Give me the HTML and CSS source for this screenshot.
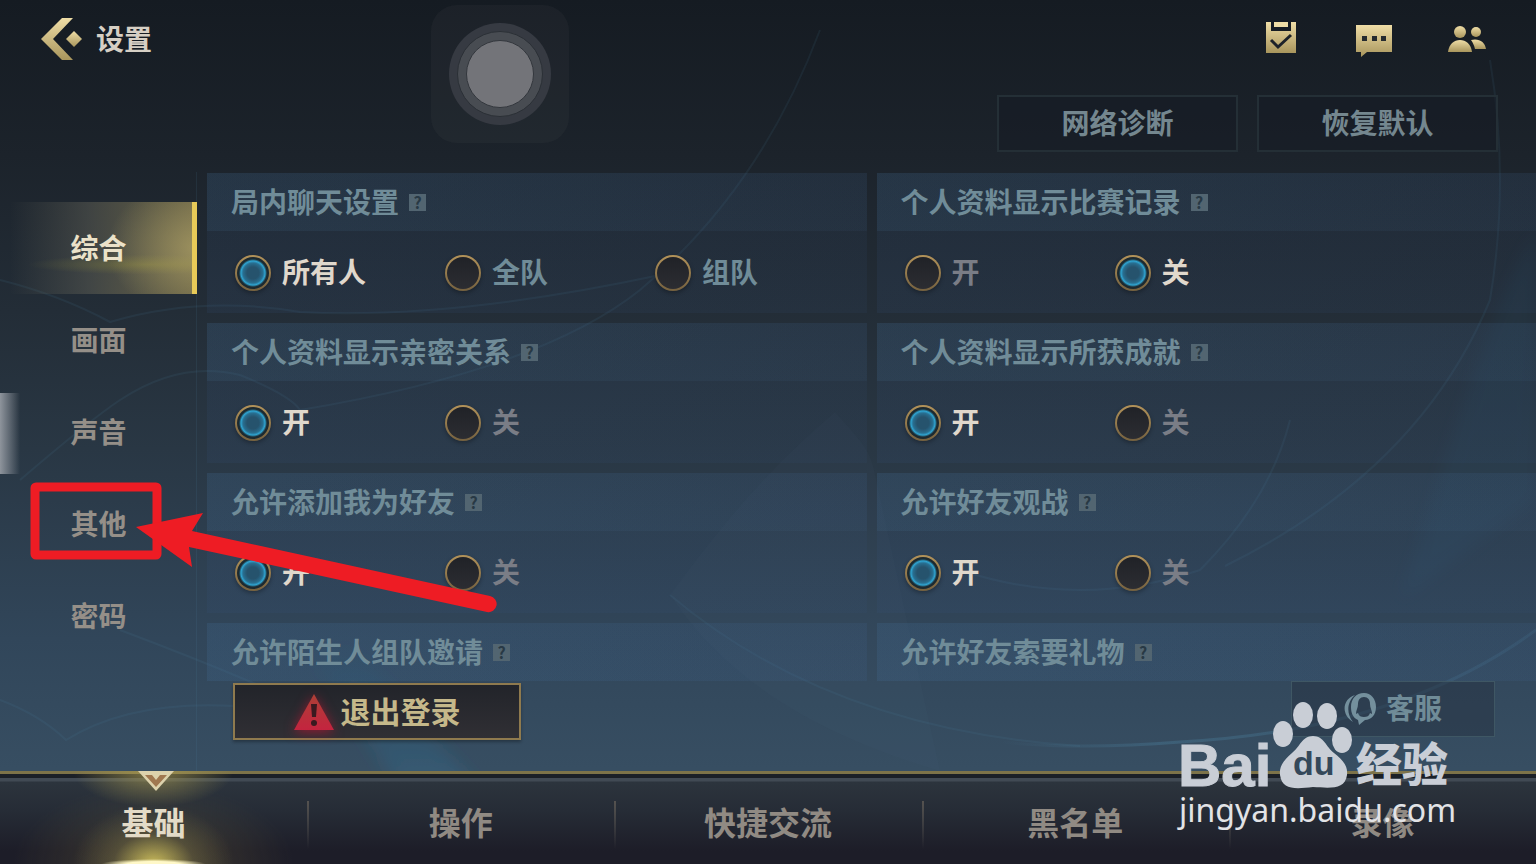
FILE: index.html
```
<!DOCTYPE html>
<html lang="zh-CN">
<head>
    <meta charset="UTF-8">
    <meta name="viewport" content="width=device-width, initial-scale=1.0">
    <title>设置</title>
    <link rel="stylesheet" href="styles.css">
</head>
<body>
    <div class="app">
        <svg class="backdrop" viewBox="0 0 1536 864" preserveAspectRatio="none" aria-hidden="true">
            <defs>
                <linearGradient id="gold" x1="0" y1="0" x2="0" y2="1">
                    <stop offset="0" stop-color="#efdda6"/>
                    <stop offset="1" stop-color="#a8955c"/>
                </linearGradient>
                <linearGradient id="alert" x1="0" y1="0" x2="0" y2="1">
                    <stop offset="0" stop-color="#ad4036"/>
                    <stop offset="1" stop-color="#c4243f"/>
                </linearGradient>
                <linearGradient id="ray" x1="0" y1="0" x2="0" y2="1">
                    <stop offset="0" stop-color="#2f7fa8" stop-opacity="0"/>
                    <stop offset="1" stop-color="#2f7fa8" stop-opacity=".25"/>
                </linearGradient>
                <linearGradient id="swoosh" x1="0" y1="0" x2="1" y2="0">
                    <stop offset="0" stop-color="#4f8bab" stop-opacity="0"/>
                    <stop offset=".3" stop-color="#4f8bab" stop-opacity=".3"/>
                    <stop offset="1" stop-color="#4f8bab" stop-opacity=".15"/>
                </linearGradient>
                <filter id="soft">
                    <feGaussianBlur stdDeviation="8"/>
                </filter>
            </defs>
            <path d="M300 640 L350 640 L480 790 L400 790Z" fill="url(#ray)" filter="url(#soft)"/>
            <path d="M1536 230 C1480 330 1440 480 1400 600 L1536 500Z" fill="#2f6f98" opacity=".08" filter="url(#soft)"/>
            <path d="M670 595 C740 500 780 460 835 412 C860 440 870 450 874 470 L940 771 C800 730 720 670 670 595Z" fill="#5a7f98" opacity=".04"/>
            <g fill="none" stroke="#4f8bab" stroke-width="2" opacity=".1">
                <path d="M0 280 Q60 295 110 322 Q200 295 300 312 Q450 320 660 275"/>
                <path d="M20 480 Q90 420 120 400 Q180 360 240 375 Q290 395 300 410 Q540 370 640 290 Q760 190 820 30"/>
                <path d="M0 700 Q40 715 66 740 Q130 700 235 706"/>
                <path d="M120 630 Q200 660 270 690"/>
                <path d="M670 595 Q830 730 1080 746"/>
                <path d="M960 570 Q1080 610 1200 570 Q1270 500 1290 420"/>
                <path d="M1225 566 Q1420 470 1490 300 Q1510 180 1490 60"/>
            </g>
            <path d="M1000 742 Q1080 750 1180 742 Q1400 730 1536 630" fill="none" stroke="url(#swoosh)" stroke-width="3"/>
        </svg>

        <header class="topbar">
            <button type="button" class="back" aria-label="返回">
                <svg width="42" height="44" viewBox="0 0 42 44">
                    <path d="M22 1H33L13 22L33 43H22L1 22Z" fill="url(#gold)"/>
                    <path d="M34 14L42 22L34 30L26 22Z" fill="url(#gold)"/>
                </svg>
            </button>
            <h1>设置</h1>
            <nav class="shortcuts">
                <button type="button" aria-label="任务">
                    <svg width="40" height="40" viewBox="0 0 40 40">
                        <path d="M5 3H10V12H30V3H35V34H5Z" fill="url(#gold)"/>
                        <path d="M13 3H27V8H13Z" fill="#efdda6"/>
                        <path d="M10 21L17 28L30 16" fill="none" stroke="#1d2229" stroke-width="3"/>
                    </svg>
                </button>
                <button type="button" aria-label="聊天">
                    <svg width="40" height="40" viewBox="0 0 40 40">
                        <path d="M2 6H38V33H13L7 38V33H2Z" fill="url(#gold)"/>
                        <path d="M8 17H13V22H8ZM18 17H23V22H18ZM27 17H32V22H27Z" fill="#252a2f"/>
                    </svg>
                </button>
                <button type="button" aria-label="好友">
                    <svg width="40" height="40" viewBox="0 0 40 40" fill="url(#gold)">
                        <circle cx="13" cy="13" r="6"/>
                        <circle cx="29" cy="13" r="5"/>
                        <path d="M1 33C2 25 7 21 13 21S24 25 25 33Z"/>
                        <path d="M24 21C32 19 38 23 39 30H28C27 26 26 24 24 21Z"/>
                    </svg>
                </button>
            </nav>
        </header>

        <div class="tools">
            <button type="button" class="tool">网络诊断</button>
            <button type="button" class="tool">恢复默认</button>
        </div>

        <main class="content">
            <nav class="side">
                <button type="button" class="side-tab active">综合</button>
                <button type="button" class="side-tab">画面</button>
                <button type="button" class="side-tab">声音</button>
                <button type="button" class="side-tab">其他</button>
                <button type="button" class="side-tab">密码</button>
            </nav>

            <div class="panel">
                <div class="cards">
                    <section class="card">
                        <div class="card-head"><h2>局内聊天设置</h2><button type="button" class="help">?</button></div>
                        <div class="options">
                            <label class="option"><input type="radio" name="chat" checked><span>所有人</span></label>
                            <label class="option blue"><input type="radio" name="chat"><span>全队</span></label>
                            <label class="option blue"><input type="radio" name="chat"><span>组队</span></label>
                        </div>
                    </section>
                    <section class="card">
                        <div class="card-head"><h2>个人资料显示比赛记录</h2><button type="button" class="help">?</button></div>
                        <div class="options">
                            <label class="option"><input type="radio" name="record"><span>开</span></label>
                            <label class="option"><input type="radio" name="record" checked><span>关</span></label>
                        </div>
                    </section>
                    <section class="card">
                        <div class="card-head"><h2>个人资料显示亲密关系</h2><button type="button" class="help">?</button></div>
                        <div class="options">
                            <label class="option"><input type="radio" name="relation" checked><span>开</span></label>
                            <label class="option"><input type="radio" name="relation"><span>关</span></label>
                        </div>
                    </section>
                    <section class="card">
                        <div class="card-head"><h2>个人资料显示所获成就</h2><button type="button" class="help">?</button></div>
                        <div class="options">
                            <label class="option"><input type="radio" name="achievement" checked><span>开</span></label>
                            <label class="option"><input type="radio" name="achievement"><span>关</span></label>
                        </div>
                    </section>
                    <section class="card">
                        <div class="card-head"><h2>允许添加我为好友</h2><button type="button" class="help">?</button></div>
                        <div class="options">
                            <label class="option"><input type="radio" name="add" checked><span>开</span></label>
                            <label class="option"><input type="radio" name="add"><span>关</span></label>
                        </div>
                    </section>
                    <section class="card">
                        <div class="card-head"><h2>允许好友观战</h2><button type="button" class="help">?</button></div>
                        <div class="options">
                            <label class="option"><input type="radio" name="watch" checked><span>开</span></label>
                            <label class="option"><input type="radio" name="watch"><span>关</span></label>
                        </div>
                    </section>
                    <section class="card">
                        <div class="card-head"><h2>允许陌生人组队邀请</h2><button type="button" class="help">?</button></div>
                    </section>
                    <section class="card">
                        <div class="card-head"><h2>允许好友索要礼物</h2><button type="button" class="help">?</button></div>
                    </section>
                </div>

                <div class="actions">
                    <button type="button" class="logout">
                        <svg width="40" height="36" viewBox="0 0 40 36">
                            <path d="M20 0L40 36H0Z" fill="url(#alert)"/>
                            <path d="M17 10H23L22 23H18Z" fill="#3a1a20"/>
                            <circle cx="20" cy="29" r="3" fill="#3a1a20"/>
                        </svg>
                        <span>退出登录</span>
                    </button>
                    <button type="button" class="service">
                        <svg width="32" height="32" viewBox="0 0 32 32" fill="#74909d">
                            <path d="M11 2C-2 6 -3 22 9 29C2 20 3 9 11 2Z"/>
                            <path fill-rule="evenodd" d="M20 0C27 0 32 6 32 14C32 22 27 27 21 27L15 32L14 27C9 25 7 20 7 14C7 6 12 0 20 0ZM20 4C16 4 14 7 14 11C14 15 12 17 12 21L14 20C15 23 17 24 20 24S25 23 26 20L28 21C28 17 26 15 26 11C26 7 24 4 20 4Z"/>
                        </svg>
                        <span>客服</span>
                    </button>
                </div>
            </div>
        </main>

        <nav class="bottom">
            <button type="button" class="bottom-tab active">
                <svg class="marker" width="36" height="20" viewBox="0 0 36 20">
                    <path d="M0 0H36L18 20Z" fill="#ddd2ac"/>
                    <path d="M7 4H14L18 9L22 4H29L18 16Z" fill="#a07850"/>
                </svg>
                基础
            </button>
            <button type="button" class="bottom-tab">操作</button>
            <button type="button" class="bottom-tab">快捷交流</button>
            <button type="button" class="bottom-tab">黑名单</button>
            <button type="button" class="bottom-tab">录像</button>
        </nav>

        <!-- floating layers -->
        <div class="touch"><span class="touch-ring"><span class="touch-mid"><span class="touch-dot"></span></span></span></div>
        <div class="edge"></div>
        <svg class="arrow" width="470" height="140" viewBox="30 480 470 140" aria-hidden="true">
            <rect x="35" y="487" width="122" height="68" rx="1" fill="none" stroke="#ee1c24" stroke-width="9" stroke-linejoin="round"/>
            <path d="M136 527L203 513L192 531L490 596A8 8 0 0 1 487 612L189 547L192 567Z" fill="#ee1c24"/>
        </svg>
        <svg class="watermark" width="280" height="136" viewBox="0 0 280 136">
            <text class="wm-bai" x="2" y="86">Bai</text>
            <g fill="#c9ced6">
                <ellipse cx="107" cy="34" rx="10" ry="13"/>
                <ellipse cx="127" cy="15" rx="10" ry="13"/>
                <ellipse cx="151" cy="16" rx="10" ry="13"/>
                <ellipse cx="166" cy="40" rx="10" ry="13"/>
                <path d="M137 36C148 36 150 47 158 53C167 60 172 66 171 75C169 90 154 88 137 87C119 89 106 90 104 75C103 66 108 60 116 53C124 47 126 36 137 36Z"/>
            </g>
            <text class="wm-du" x="117" y="75">du</text>
            <text class="wm-cn" x="180" y="81">经验</text>
            <text class="wm-url" x="3" y="122">jingyan.baidu.com</text>
        </svg>
    </div>
</body>
</html>
```

FILE: styles.css
```
* {
    box-sizing: border-box;
}
body {
    margin: 0;
    font-family: "Noto Sans CJK SC", "Noto Sans", sans-serif;
    font-weight: 700;
    background: #151b22;
}
button {
    padding: 0;
    border: none;
    background: none;
    font: inherit;
    color: inherit;
    cursor: pointer;
}
h1, h2 {
    margin: 0;
    padding-bottom: 3px;
    font-size: 28px;
    line-height: 40px;
}
svg {
    display: block;
    flex: none;
}
.app {
    position: relative;
    height: 100vh;
    display: flex;
    flex-direction: column;
    overflow: hidden;
    background: linear-gradient(#151b22 0%, #1c232b 18%, #232d37 36%, #293744 52%, #31465a 74%, #374e62 89%);
}
.backdrop {
    position: absolute;
    width: 100%;
    height: 100%;
}
.topbar, .tools, .content, .bottom {
    position: relative;
}

/* header */
.topbar {
    display: flex;
    align-items: center;
    height: 78px;
    padding: 0 49px 0 40px;
}
.topbar h1 {
    margin-left: 14px;
    color: #d6cfc4;
}
.shortcuts {
    display: flex;
    gap: 53px;
    margin-left: auto;
}
.tools {
    display: flex;
    justify-content: flex-end;
    gap: 19px;
    padding: 17px 38px 20px;
}
.tool {
    width: 241px;
    height: 57px;
    padding-bottom: 3px;
    border: 2px solid #242f36;
    background: rgba(20, 25, 35, 0.4);
    font-size: 28px;
    color: #74878f;
}

/* main area */
.content {
    flex: 1;
    min-height: 0;
    display: flex;
    gap: 10px;
}
.side {
    width: 197px;
    padding-top: 30px;
    flex: none;
    box-shadow: inset -1px 0 rgba(80, 140, 170, 0.12);
}
.side-tab {
    display: block;
    width: 100%;
    height: 92px;
    padding-bottom: 2px;
    font-size: 28px;
    color: #958f88;
}
.side-tab.active {
    color: #ebe2c9;
    box-shadow: inset -5px 0 #e8ca58;
    background:
        radial-gradient(ellipse 90px 70px at 100% 50%, rgba(190, 175, 110, 0.6), transparent),
        radial-gradient(ellipse 120px 10px at 75% 68%, rgba(150, 145, 60, 0.4), transparent),
        linear-gradient(90deg, transparent 5%, rgba(95, 95, 85, 0.5) 45%, rgba(125, 115, 75, 0.8));
}
.panel {
    flex: 1;
    min-width: 0;
    display: flex;
    flex-direction: column;
}
.cards {
    flex: 1;
    min-height: 0;
    overflow: hidden;
    display: grid;
    grid-template-columns: repeat(2, minmax(0, 1fr));
    grid-auto-rows: 140px;
    gap: 10px;
    padding-top: 1px;
}
.card {
    background: linear-gradient(90deg, rgba(55, 85, 130, 0.14), rgba(55, 85, 130, 0.1));
}
.card-head {
    display: flex;
    align-items: center;
    gap: 10px;
    height: 58px;
    padding: 0 24px;
    background: linear-gradient(90deg, rgba(75, 125, 160, 0.13), rgba(75, 115, 155, 0.08));
}
.card-head h2 {
    color: #708c98;
}
.help {
    width: 17px;
    height: 17px;
    background: #526571;
    color: #283945;
    font-size: 16px;
    line-height: 16px;
}
.options {
    display: flex;
    height: 82px;
    padding: 2px 28px 0;
    align-items: center;
}
.option {
    display: flex;
    flex: none;
    align-items: center;
    gap: 11px;
    width: 210px;
    font-size: 28px;
    line-height: 40px;
    color: #7a7d86;
}
.option span {
    padding-bottom: 4px;
}
.option.blue {
    color: #708c98;
}
.option:has(input:checked) {
    color: #e0d8cc;
}
.option input {
    appearance: none;
    flex: none;
    width: 36px;
    height: 36px;
    margin: 0;
    border: 2px solid transparent;
    border-radius: 50%;
    background:
        linear-gradient(#202227, #2c2d32) padding-box,
        linear-gradient(#b3935a, #75613f) border-box;
    box-shadow: 0 2px 4px rgba(0, 0, 0, 0.3);
}
.option input:checked {
    background:
        radial-gradient(circle at 50% 50%, #26536d 0 6px, #286f91 10px, #2fa5d2 12px, #1d2a30 14px) padding-box,
        linear-gradient(#b3935a, #75613f) border-box;
}

/* row under the cards */
.actions {
    display: flex;
    justify-content: space-between;
    align-items: flex-start;
    height: 90px;
    padding: 0 41px 0 26px;
}
.actions span {
    padding-bottom: 4px;
}
.logout {
    display: flex;
    align-items: center;
    justify-content: center;
    gap: 7px;
    width: 288px;
    height: 57px;
    margin-top: 2px;
    border: 2px solid #8f7a4e;
    background: linear-gradient(#22242a, #302f34);
    box-shadow: 0 2px 3px rgba(0, 0, 0, 0.3);
    font-size: 30px;
    color: #c5b88a;
}
.logout svg {
    filter: drop-shadow(0 2px 6px rgba(190, 20, 50, 0.7));
}
.service {
    display: flex;
    align-items: center;
    justify-content: center;
    gap: 10px;
    width: 204px;
    height: 56px;
    border: 1px solid #3f5764;
    background: rgba(38, 50, 65, 0.5);
    font-size: 28px;
    color: #708c98;
}

/* bottom tabs */
.bottom {
    display: grid;
    grid-template-columns: repeat(5, 1fr);
    height: 93px;
    flex: none;
    background: linear-gradient(#7d7349 0 3px, #1b2027 3px 7px, #414a54 7px 10px, #2c343d 11px, #262c36 40px, #1d1d28 80px);
}
.bottom-tab {
    position: relative;
    padding-top: 6px;
    font-size: 32px;
    color: #908a83;
}
.bottom-tab + .bottom-tab {
    background: linear-gradient(transparent 30px, #55524f 30px, transparent 78px) left / 2px 100% no-repeat;
}
.bottom-tab.active {
    color: #e3dbc7;
    background:
        radial-gradient(ellipse 52px 5px at 50% 100%, #fff8c8 50%, transparent),
        radial-gradient(ellipse 80px 60px at 50% 100%, rgba(215, 200, 95, 0.9), rgba(150, 140, 80, 0.3) 50%, transparent),
        radial-gradient(ellipse 140px 80px at 50% 100%, rgba(120, 105, 60, 0.4), transparent),
        radial-gradient(ellipse 80px 36px at 50% 0, rgba(170, 155, 80, 0.7), transparent);
}
.marker {
    position: absolute;
    top: 0;
    left: calc(50% - 16px);
}

/* floating layers */
.touch {
    position: absolute;
    top: 5px;
    left: 431px;
    width: 138px;
    height: 138px;
    border-radius: 26px;
    background: rgba(120, 110, 120, 0.08);
    display: grid;
    place-items: center;
}
.touch span {
    display: grid;
    place-items: center;
    border-radius: 50%;
}
.touch-ring {
    width: 102px;
    height: 102px;
    background: #363a42;
}
.touch-mid {
    width: 86px;
    height: 86px;
    background: #484c52;
    border: 1px solid #2b3036;
}
.touch-dot {
    width: 68px;
    height: 68px;
    background: #737479;
    border: 1px solid #33373d;
}
.edge {
    position: absolute;
    top: 393px;
    left: 0;
    width: 20px;
    height: 81px;
    background: linear-gradient(90deg, #8e949c, rgba(142, 148, 156, 0.5) 50%, transparent);
}
.arrow {
    position: absolute;
    top: 480px;
    left: 30px;
}
.watermark {
    position: absolute;
    top: 700px;
    left: 1176px;
}
.watermark text {
    fill: #c9ced6;
}
.wm-bai {
    font: 700 60px "Liberation Sans", sans-serif;
    stroke: #c9ced6;
    stroke-width: 1px;
}
.watermark .wm-du {
    font: 700 34px "Liberation Sans", sans-serif;
    fill: #34485a;
}
.wm-cn {
    font-size: 46px;
    font-weight: 900;
}
.watermark .wm-url {
    font: 400 32px "Noto Sans", sans-serif;
    fill: #e2e3e6;
}
```
